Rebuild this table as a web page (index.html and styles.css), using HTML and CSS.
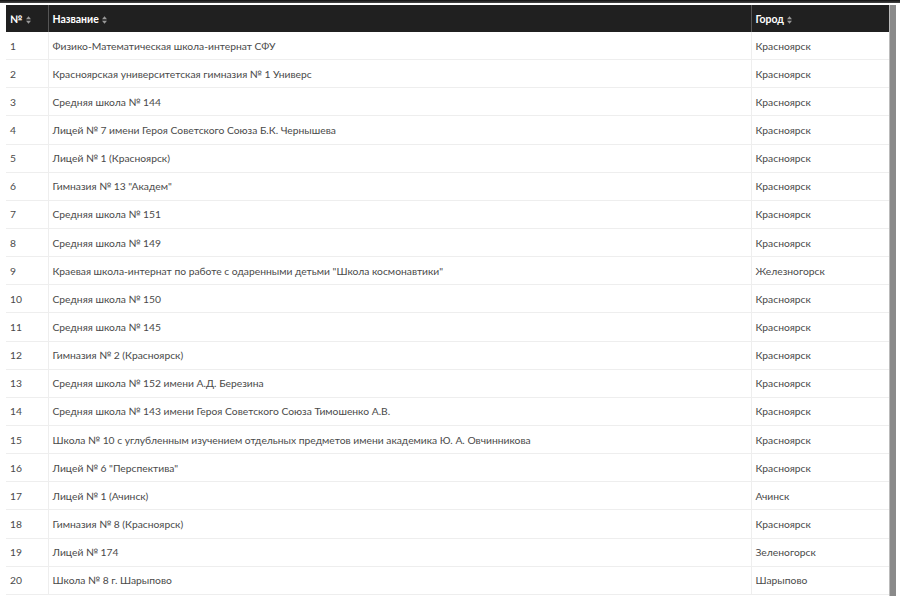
FILE: index.html
```html
<!DOCTYPE html>
<html lang="ru">
<head>
<meta charset="utf-8">
<link rel="stylesheet" href="styles.css">
</head>
<body>
<div class="topbar"></div>
<div class="frame">
  <div class="wrap">
    <table class="schools">
      <colgroup><col class="c-num"><col class="c-name"><col class="c-city"></colgroup>
      <thead>
        <tr>
          <th>№ <svg class="sort" viewBox="0 0 6 9"><path d="M3 0L6 3.5H0Z M3 9L0 5.5H6Z"/></svg></th>
          <th>Название <svg class="sort" viewBox="0 0 6 9"><path d="M3 0L6 3.5H0Z M3 9L0 5.5H6Z"/></svg></th>
          <th>Город <svg class="sort" viewBox="0 0 6 9"><path d="M3 0L6 3.5H0Z M3 9L0 5.5H6Z"/></svg></th>
        </tr>
      </thead>
      <tbody>
        <tr><td>1</td><td>Физико-Математическая школа-интернат СФУ</td><td>Красноярск</td></tr>
        <tr><td>2</td><td>Красноярская университетская гимназия № 1 Универс</td><td>Красноярск</td></tr>
        <tr><td>3</td><td>Средняя школа № 144</td><td>Красноярск</td></tr>
        <tr><td>4</td><td>Лицей № 7 имени Героя Советского Союза Б.К. Чернышева</td><td>Красноярск</td></tr>
        <tr><td>5</td><td>Лицей № 1 (Красноярск)</td><td>Красноярск</td></tr>
        <tr><td>6</td><td>Гимназия № 13 "Академ"</td><td>Красноярск</td></tr>
        <tr><td>7</td><td>Средняя школа № 151</td><td>Красноярск</td></tr>
        <tr><td>8</td><td>Средняя школа № 149</td><td>Красноярск</td></tr>
        <tr><td>9</td><td>Краевая школа-интернат по работе с одаренными детьми "Школа космонавтики"</td><td>Железногорск</td></tr>
        <tr><td>10</td><td>Средняя школа № 150</td><td>Красноярск</td></tr>
        <tr><td>11</td><td>Средняя школа № 145</td><td>Красноярск</td></tr>
        <tr><td>12</td><td>Гимназия № 2 (Красноярск)</td><td>Красноярск</td></tr>
        <tr><td>13</td><td>Средняя школа № 152 имени А.Д. Березина</td><td>Красноярск</td></tr>
        <tr><td>14</td><td>Средняя школа № 143 имени Героя Советского Союза Тимошенко А.В.</td><td>Красноярск</td></tr>
        <tr><td>15</td><td>Школа № 10 с углубленным изучением отдельных предметов имени академика Ю. А. Овчинникова</td><td>Красноярск</td></tr>
        <tr><td>16</td><td>Лицей № 6 "Перспектива"</td><td>Красноярск</td></tr>
        <tr><td>17</td><td>Лицей № 1 (Ачинск)</td><td>Ачинск</td></tr>
        <tr><td>18</td><td>Гимназия № 8 (Красноярск)</td><td>Красноярск</td></tr>
        <tr><td>19</td><td>Лицей № 174</td><td>Зеленогорск</td></tr>
        <tr><td>20</td><td>Школа № 8 г. Шарыпово</td><td>Шарыпово</td></tr>
      </tbody>
    </table>
  </div>
  <div class="scrollbar"></div>
</div>
</body>
</html>
```
FILE: styles.css
```css
html, body {
  margin: 0;
  padding: 0;
  background: #fff;
}
body {
  font-family: "Lato", "Noto Sans", sans-serif;
  color: #4a4a4a;
  overflow: hidden;
}
.topbar {
  height: 3px;
  background: linear-gradient(#111, #444);
}
.frame {
  display: flex;
  align-items: flex-start;
  margin-top: 2px;
  padding-left: 6px;
}
.wrap {
  width: 883px;
}
.schools {
  width: 883px;
  border-collapse: collapse;
  table-layout: fixed;
  font-size: 10.3px;
}
.c-num { width: 42px; }
.c-name { width: 703px; }
.c-city { width: 138px; }
.schools th {
  background: #202020;
  color: #fff;
  font-weight: 700;
  font-size: 10.5px;
  text-align: left;
  height: 27px;
  padding: 0 4px;
  border-left: 1px solid #555;
  white-space: nowrap;
}
.schools th:first-child { border-left: none; }
.sort {
  width: 5px;
  height: 8px;
  fill: #9a9a9a;
  vertical-align: -1px;
  margin-left: 1px;
}
.schools td {
  height: 27.15px;
  padding: 0 4px;
  border-left: 1px solid #eee;
  border-bottom: 1px solid #eee;
  white-space: nowrap;
  overflow: hidden;
}
.schools td:first-child { border-left: none; }
.scrollbar {
  width: 6px;
  height: 591px;
  background: #8a8a8a;
  border-left: 1px solid #bbb;
}
```
